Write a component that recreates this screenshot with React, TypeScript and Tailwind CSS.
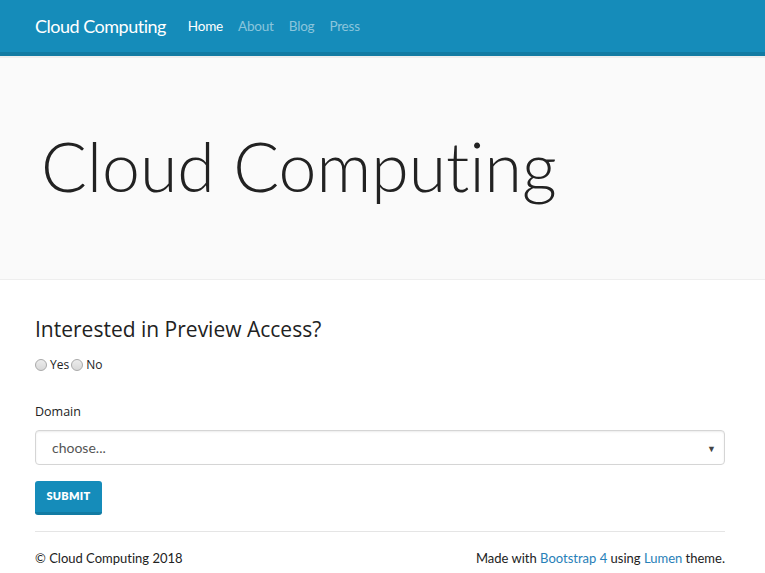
export default function App() {
  const links = ['Home', 'About', 'Blog', 'Press'];

  return (
    <div
      className="min-h-[573px] bg-white [font-variant-ligatures:none]"
      style={{ fontFamily: 'Lato, "Liberation Sans", sans-serif' }}
    >
      {/* Navbar */}
      <nav className="h-[56px] bg-[#158cba] border-b-4 border-[#127ba3]">
        <div className="flex items-center h-[52px] pl-[35px]">
          <span className="text-[18px] tracking-[-0.5px] text-white mr-[22px]">Cloud Computing</span>
          <div className="flex items-center gap-[15px] text-[13.5px] tracking-[-0.2px]">
            {links.map((l, i) => (
              <a key={l} className={i === 0 ? 'text-white' : 'text-[#8ac5dc]'}>
                {l}
              </a>
            ))}
          </div>
        </div>
      </nav>

      {/* Jumbotron */}
      <section className="h-[224px] bg-[#fafafa] border-t-2 border-b border-[#eeeeee] flex items-center pl-[41px]">
        <h1 className="text-[68px] font-light text-[#222] leading-none pb-[6px]">Cloud Computing</h1>
      </section>

      {/* Form */}
      <main className="ml-[35px] w-[690px]" style={{ fontFamily: '"Open Sans", sans-serif' }}>
        <h3 className="text-[21px] text-[#222] mt-[39px] leading-none">Interested in Preview Access?</h3>
        <div className="flex items-center mt-[16px] text-[12px] text-[#222]">
          <span className="w-[12px] h-[12px] rounded-full border border-[#a9a9a9] bg-gradient-to-b from-[#ececec] to-[#d8d8d8]" />
          <span className="ml-[3px]">Yes</span>
          <span className="w-[12px] h-[12px] rounded-full border border-[#a9a9a9] bg-gradient-to-b from-[#ececec] to-[#d8d8d8] ml-[2px]" />
          <span className="ml-[3px]">No</span>
        </div>

        <label className="block text-[12.5px] text-[#222] mt-[29px]">Domain</label>
        <div className="relative mt-[8px] h-[35px] rounded-[4px] border border-[#d5d5d5] shadow-[inset_0_1px_2px_rgba(0,0,0,0.08)] flex items-center pl-[16px]">
          <span className="text-[14px] text-[#555]" style={{ fontFamily: 'Lato, sans-serif' }}>
            choose...
          </span>
          <span className="absolute right-[8px] top-[11px] text-[9px] text-[#444]">▼</span>
        </div>

        <button
          className="mt-[16px] h-[34px] w-[67px] rounded-[3px] bg-[#158cba] border-b-[3px] border-[#127ba3] text-white text-[11px] font-extrabold tracking-[0.3px]"
          style={{ fontFamily: 'Lato, sans-serif' }}
        >
          SUBMIT
        </button>

        <hr className="mt-[16px] border-t border-[#e5e5e5]" />

        <footer className="flex justify-between mt-[17px] text-[13px] text-[#222]" style={{ fontFamily: 'Lato, sans-serif' }}>
          <span>© Cloud Computing 2018</span>
          <span>
            Made with <a className="text-[#2780b8]">Bootstrap 4</a> using <a className="text-[#2780b8]">Lumen</a> theme.
          </span>
        </footer>
      </main>
    </div>
  );
}
